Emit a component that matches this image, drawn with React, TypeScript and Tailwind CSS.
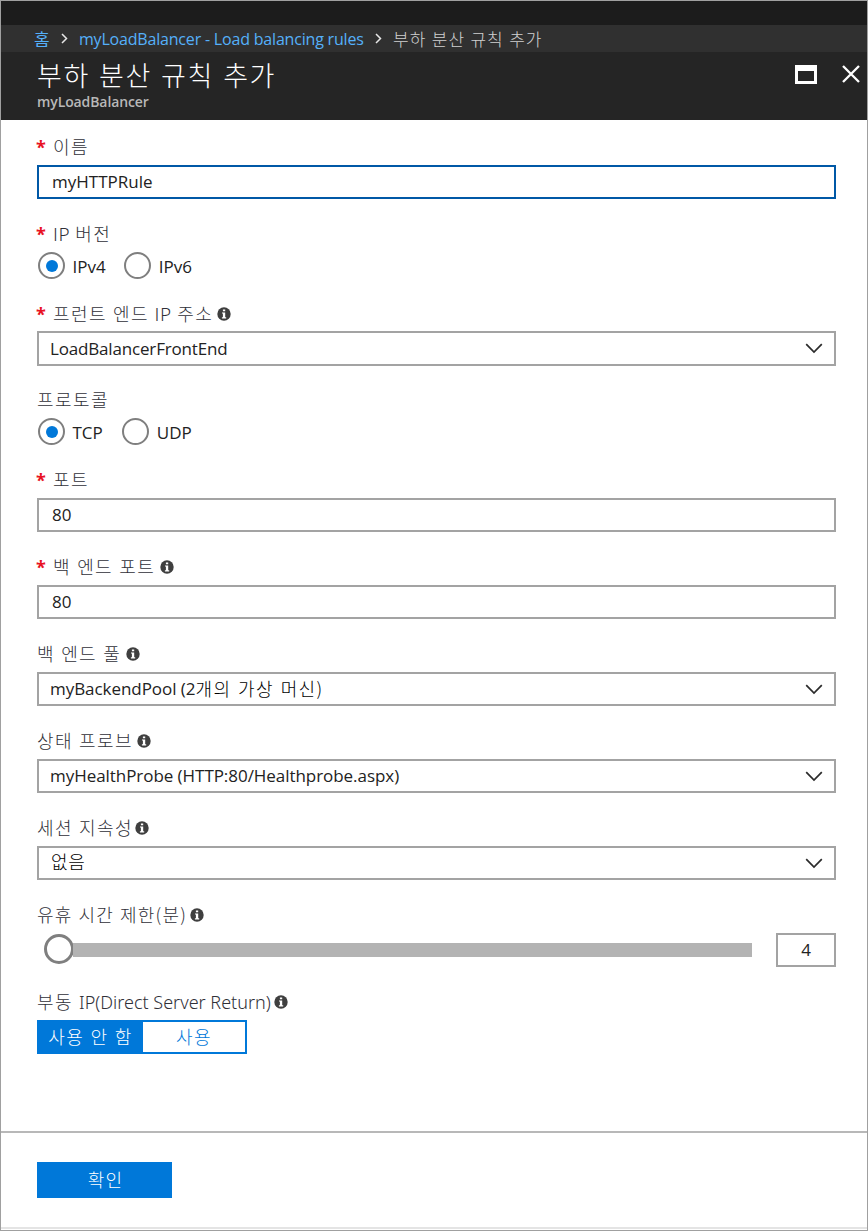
import type { ReactNode } from 'react';

const LATIN = "font-['Open_Sans','Noto_Sans_CJK_KR',sans-serif]";
const HANGUL = "font-['Noto_Sans_CJK_KR',sans-serif] font-light";

function InfoIcon() {
  return (
    <svg width="14" height="14" viewBox="0 0 14 14" className="block shrink-0">
      <circle cx="7" cy="7" r="6.7" fill="#3f3f3f" />
      <path d="M5.9 2.4h2.3v1.8H5.9zM5 5.4h3.2v4.8h1v1.2H4.9v-1.2h1V6.6H5z" fill="#fff" />
    </svg>
  );
}

function ChevronDown() {
  return (
    <svg width="18" height="11" viewBox="0 0 18 11" className="shrink-0">
      <path d="M1.2 1.2 9 9l7.8-7.8" fill="none" stroke="#2b2b2b" strokeWidth="1.7" />
    </svg>
  );
}

function Crumb() {
  return (
    <svg width="7" height="11" viewBox="0 0 7 11" className="shrink-0">
      <path d="m1 1 4.5 4.5L1 10" fill="none" stroke="#e6e6e6" strokeWidth="1.5" />
    </svg>
  );
}

function Label({ children, required, info, gap = 'ml-[4px]' }: { children: ReactNode; required?: boolean; info?: boolean; gap?: string }) {
  return (
    <div className="flex h-[20px] items-center whitespace-nowrap">
      {required && (
        <span className="-ml-px w-[17px] shrink-0 pb-[1px] font-['Open_Sans',sans-serif] text-[18px] leading-[20px] font-bold text-[#e81123]">*</span>
      )}
      <span className={`${HANGUL} pb-[2px] text-[18px] leading-[20px] tracking-[1.4px] [word-spacing:0.8px] text-[#303038]`}>{children}</span>
      {info && <span className={gap}><InfoIcon /></span>}
    </div>
  );
}

function TextField({ value, focused }: { value: string; focused?: boolean }) {
  return (
    <div className={`mt-[8px] flex h-[34px] items-center border-2 pl-[13px] ${focused ? 'border-[#0058a6]' : 'border-[#a3a3a3]'}`}>
      <span className={`${LATIN} text-[17px] leading-[20px] text-[#222]`}>{value}</span>
    </div>
  );
}

function Select({ children, tall }: { children: ReactNode; tall?: boolean }) {
  return (
    <div className={`flex items-center justify-between border-2 border-[#a3a3a3] pr-[11px] pl-[11px] ${tall ? 'mt-[7px] h-[35px]' : 'mt-[8px] h-[34px]'}`}>
      <span className={`${LATIN} flex items-center whitespace-pre text-[17px] leading-[20px] text-[#222] ${tall ? 'tracking-[-0.17px]' : 'tracking-[-0.05px]'}`}>{children}</span>
      <ChevronDown />
    </div>
  );
}

function Radio({ label, checked }: { label: string; checked?: boolean }) {
  return (
    <div className="flex items-center">
      <span className="flex size-[27px] items-center justify-center rounded-full border-2 border-[#7f7f7f]">
        {checked && <span className="size-[12px] rounded-full bg-[#0078d9]" />}
      </span>
      <span className={`${LATIN} -mr-[0.5px] pt-[2px] pl-[7.5px] text-[17px] leading-[20px] text-[#222]`}>{label}</span>
    </div>
  );
}

export default function App() {
  return (
    <div className="flex h-[1231px] w-[868px] flex-col border border-[#a0a0a0] bg-white">
      <div className="h-[24px] bg-[#1c1c1c]" />
      <nav className={`${LATIN} flex h-[27px] items-center bg-[#303030] pl-[33px] text-[16px] leading-[20px] whitespace-nowrap text-[#55b0fa]`}>
        <span className="w-[27px] font-['Noto_Sans_CJK_KR',sans-serif] text-[17px]">홈</span>
        <Crumb />
        <span className="box-content w-[296px] shrink-0 pl-[11px] tracking-[-0.19px]">myLoadBalancer - Load balancing rules</span>
        <Crumb />
        <span className={`${HANGUL} pl-[11px] text-[17px] tracking-[1px] [word-spacing:0.7px] text-[#d0d0d0]`}>부하 분산 규칙 추가</span>
      </nav>
      <header className="flex h-[68px] justify-between bg-[#252525] pr-[7px] pl-[36px]">
        <div>
          <h1 className={`${HANGUL} mt-[5px] h-[36px] text-[27px] leading-[35px] tracking-[1.6px] [word-spacing:1.6px] text-white`}>부하 분산 규칙 추가</h1>
          <p className={`${LATIN} text-[14px] leading-[17px] font-semibold tracking-[-0.1px] text-[#b8b8b8]`}>myLoadBalancer</p>
        </div>
        <div className="flex gap-[25px] pt-[13px]">
          <svg width="22" height="19" viewBox="0 0 22 19">
            <path d="M0 0h22v19H0zM3 6v10h16V6z" fill="#fff" fillRule="evenodd" />
          </svg>
          <svg width="18" height="18" viewBox="0 0 18 18">
            <path d="m1 1 16 16M17 1 1 17" stroke="#fff" strokeWidth="2.3" fill="none" />
          </svg>
        </div>
      </header>

      <main className="flex h-[1011px] flex-col pt-[17px] pr-[31px] pl-[36px]">
        <Label required>이름</Label>
        <TextField value="myHTTPRule" focused />

        <div className="mt-[25px]">
          <Label required><span className="tracking-[0.5px]">IP </span>버전</Label>
          <div className="mt-[8px] ml-[1px] flex gap-[19px]">
            <Radio label="IPv4" checked />
            <Radio label="IPv6" />
          </div>
        </div>

        <div className="mt-[25px]">
          <Label required info><span className="tracking-[1.4px]">프런트 엔드</span><span className="tracking-[0.7px]"> IP </span>주소</Label>
          <Select tall>LoadBalancerFrontEnd</Select>
        </div>

        <div className="mt-[24px]">
          <Label>프로토콜</Label>
          <div className="mt-[8px] ml-[1px] flex gap-[20px]">
            <Radio label="TCP" checked />
            <Radio label="UDP" />
          </div>
        </div>

        <div className="mt-[25px]">
          <Label required>포트</Label>
          <TextField value="80" />
        </div>
        <div className="mt-[25px]">
          <Label required info gap="ml-[5px]">백 엔드 포트</Label>
          <TextField value="80" />
        </div>
        <div className="mt-[25px]">
          <Label info gap="ml-[5px]">백 엔드 풀</Label>
          <Select>
            myBackendPool (2
            <span className={`${HANGUL} pb-[3px] text-[18px] tracking-[1.4px] [word-spacing:1.3px] text-black`}>개의 가상 머신)</span>
          </Select>
        </div>
        <div className="mt-[25px]">
          <Label info>상태 프로브</Label>
          <Select>myHealthProbe (HTTP:80/Healthprobe.aspx)</Select>
        </div>
        <div className="mt-[25px]">
          <Label info gap="ml-[2px]">세션 지속성</Label>
          <Select>
            <span className={`${HANGUL} pb-[4px] pl-[1px] text-[18px] tracking-[0.8px] text-black`}>없음</span>
          </Select>
        </div>

        <div className="mt-[25px]">
          <Label info gap="ml-[3px]">
            <span className="tracking-[1.2px]">유휴 시간 제한(분)</span>
          </Label>
          <div className="mt-[8px] flex h-[34px] items-center justify-between">
            <div className="ml-[7px] flex w-[708px] items-center">
              <span className="-mt-[2px] size-[30px] shrink-0 rounded-full border-3 border-[#7f7f7f] bg-white" />
              <span className="-ml-[1px] h-[14px] flex-1 bg-[#b3b3b3]" />
            </div>
            <div className={`${LATIN} flex h-[34px] w-[60px] items-center justify-center border-2 border-[#a3a3a3] text-[17px] leading-[20px] text-[#222]`}>4</div>
          </div>
        </div>

        <div className="mt-[25px]">
          <Label info gap="ml-[3px]">
            부동 <span className="font-['Noto_Sans',sans-serif] tracking-normal [word-spacing:0px]">IP(Direct Server Return)</span>
          </Label>
          <div className={`${HANGUL} mt-[8px] flex h-[34px] w-[210px] border-2 border-[#0078d9] text-[18px] leading-[28px] tracking-[1.4px] [word-spacing:1px]`}>
            <div className="w-[104px] bg-[#0078d9] pr-[1px] text-center text-white">사용 안 함</div>
            <div className="flex-1 text-center text-[#0078d9]">사용</div>
          </div>
        </div>
      </main>

      <footer className="flex h-[98px] flex-col justify-between border-t-2 border-[#b8b8b8]">
        <button className={`${HANGUL} mt-[29px] ml-[36px] h-[36px] w-[135px] bg-[#0078d9] pb-[2px] pl-[2px] text-[18px] leading-[32px] tracking-[1.3px] text-white`}>확인</button>
        <div className="h-[2px] bg-[#e4e4e4]" />
      </footer>
    </div>
  );
}
